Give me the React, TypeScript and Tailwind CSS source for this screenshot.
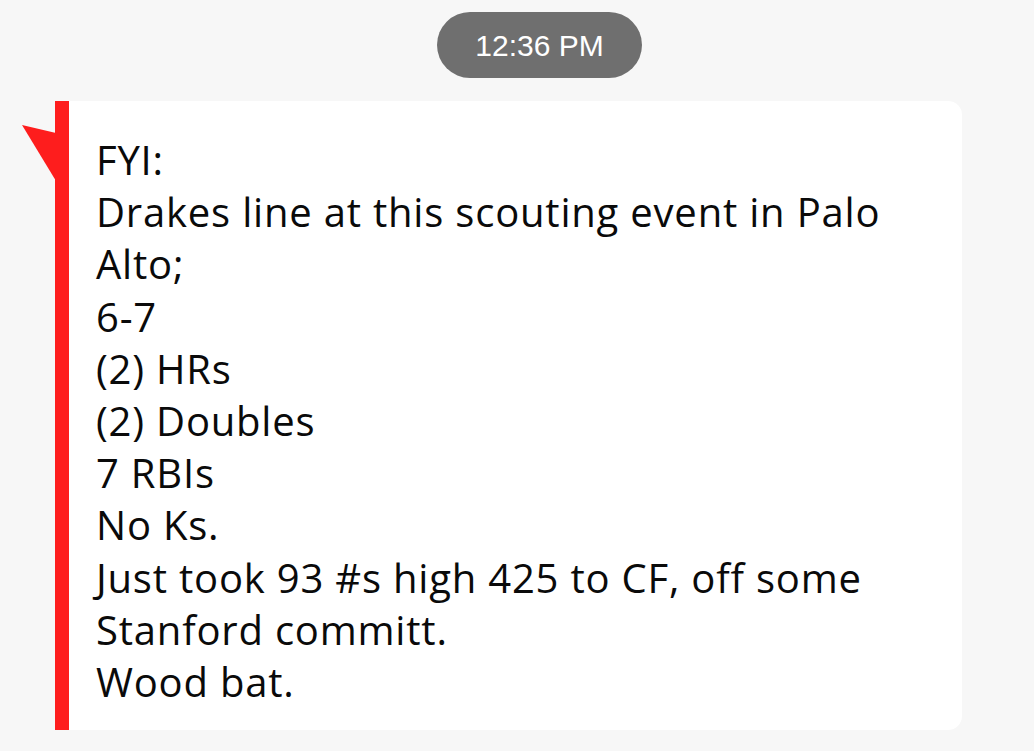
const lines = [
  "FYI:",
  "Drakes line at this scouting event in Palo",
  "Alto;",
  "6-7",
  "(2) HRs",
  "(2) Doubles",
  "7 RBIs",
  "No Ks.",
  "Just took 93 #s high 425 to CF, off some",
  "Stanford committ.",
  "Wood bat.",
];

export default function App() {
  return (
    <div className="w-[1034px] h-[751px] bg-[#f7f7f7] overflow-hidden">
      {/* time pill */}
      <div className="flex pt-[12px] pl-[437px]">
        <div
          className="w-[205px] h-[66px] rounded-full bg-[#6f6f6f] text-white flex items-center justify-center text-[30px]"
          style={{ fontFamily: '"Liberation Sans", Arial, sans-serif' }}
        >
          12:36 PM
        </div>
      </div>

      {/* message */}
      <div className="relative mt-[23px] ml-[55px] w-[907px] flex">
        <svg
          className="absolute left-[-33px] top-[24px]"
          width="34"
          height="56"
          viewBox="0 0 34 56"
        >
          <polygon points="0,0 34,8 34,56" fill="#fe1d1d" />
        </svg>
        <div className="w-[14px] bg-[#fe1d1d] shrink-0" />
        <div
          className="flex-1 bg-white rounded-r-[14px] pl-[27px] pt-[33px] pb-[22px] text-[#0a0a0a] text-[40px] leading-[52.2px] tracking-[0.8px]"
          style={{ fontFamily: '"Open Sans", "Noto Sans", sans-serif' }}
        >
          {lines.map((l, i) => (
            <div key={i} className="whitespace-nowrap">
              {l}
            </div>
          ))}
        </div>
      </div>
    </div>
  );
}
